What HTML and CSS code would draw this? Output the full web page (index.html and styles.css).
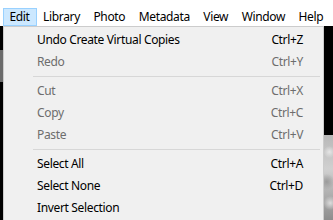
FILE: index.html
```html
<!DOCTYPE html>
<html>

<head>
    <title>Edit menu</title>
    <link rel="stylesheet" href="styles.css">
</head>

<body>

    <div id="title-bar">
        <span>Adobe Photoshop Lightroom Classic - Photography - Library</span>
    </div>

    <div id="menu-bar">
        <span class="menu-item active">Edit</span>
        <span class="menu-item">Library</span>
        <span class="menu-item">Photo</span>
        <span class="menu-item">Metadata</span>
        <span class="menu-item">View</span>
        <span class="menu-item">Window</span>
        <span class="menu-item">Help</span>
    </div>

    <div id="workspace">
        <div id="left-edge"><div class="grip"></div></div>

        <!-- Випадаюче меню Edit -->
        <div id="dropdown">
            <div class="row"><span>Undo Create Virtual Copies</span><span>Ctrl+Z</span></div>
            <div class="row disabled"><span>Redo</span><span>Ctrl+Y</span></div>
            <div class="separator"></div>
            <div class="row disabled"><span>Cut</span><span>Ctrl+X</span></div>
            <div class="row disabled"><span>Copy</span><span>Ctrl+C</span></div>
            <div class="row disabled"><span>Paste</span><span>Ctrl+V</span></div>
            <div class="separator"></div>
            <div class="row"><span>Select All</span><span>Ctrl+A</span></div>
            <div class="row"><span>Select None</span><span>Ctrl+D</span></div>
            <div class="row"><span>Invert Selection</span><span></span></div>
        </div>

        <div id="right-edge"><div class="photo"></div></div>
    </div>

</body>

</html>
```

FILE: styles.css
```css
body { /* Сторінка */
    margin: 0;
    width: 333px;
    height: 220px;
    overflow: hidden;
    background-color: #000;
    font-family: "Noto Sans", sans-serif;
    font-size: 12px;
    letter-spacing: -0.35px;
    color: #000;
}

#title-bar { /* Верхня смуга заголовка, видно лише низ тексту */
    height: 8px;
    overflow: hidden;
    background-color: #fff;
    padding-left: 52px;
    white-space: nowrap;
}

#title-bar span {
    display: block;
    margin-top: -15px;
    line-height: 16px;
}

#menu-bar { /* Рядок меню */
    display: flex;
    height: 18px;
    padding-left: 3px;
    background-color: #fff;
}

.menu-item {
    padding: 0 6px 0 5.5px;
    height: 16px;
    line-height: 16px;
    border: 1px solid transparent;
    border-bottom: none;
}

.menu-item.active {
    background-color: #cce8ff;
    border-color: #99d1ff;
    border-bottom: 1px solid #99d1ff;
}

#workspace {
    display: flex;
    height: 194px;
}

#left-edge {
    width: 3px;
    padding-top: 24px;
}

#left-edge .grip {
    height: 32px;
    background-color: #6b6b6b;
}

#dropdown { /* Випадаюче меню */
    width: 319px;
    height: 200px;
    background-color: #f0f0f0;
    border: 1px solid #cccccc;
    padding-top: 2px;
}

.row {
    display: flex;
    justify-content: space-between;
    height: 22px;
    line-height: 22px;
    padding-left: 33px;
    padding-right: 20px;
}

.row.disabled {
    color: #6d6d6d;
}

.separator {
    height: 1px;
    margin: 3px 3px 3px 29px;
    background-color: #d7d7d7;
}

#right-edge {
    flex: 1;
    display: flex;
    flex-direction: column;
    justify-content: flex-end;
}

#right-edge .photo { /* Фото в правому куті */
    height: 85px;
    background:
        radial-gradient(circle at 60% 20%, #e6e6e6 0, transparent 6px),
        radial-gradient(circle at 30% 55%, #9a9a9a 0, transparent 8px),
        radial-gradient(circle at 70% 80%, #dcdcdc 0, transparent 7px),
        linear-gradient(#b8b8b8, #d0d0d0 40%, #8d8d8d);
}
```
